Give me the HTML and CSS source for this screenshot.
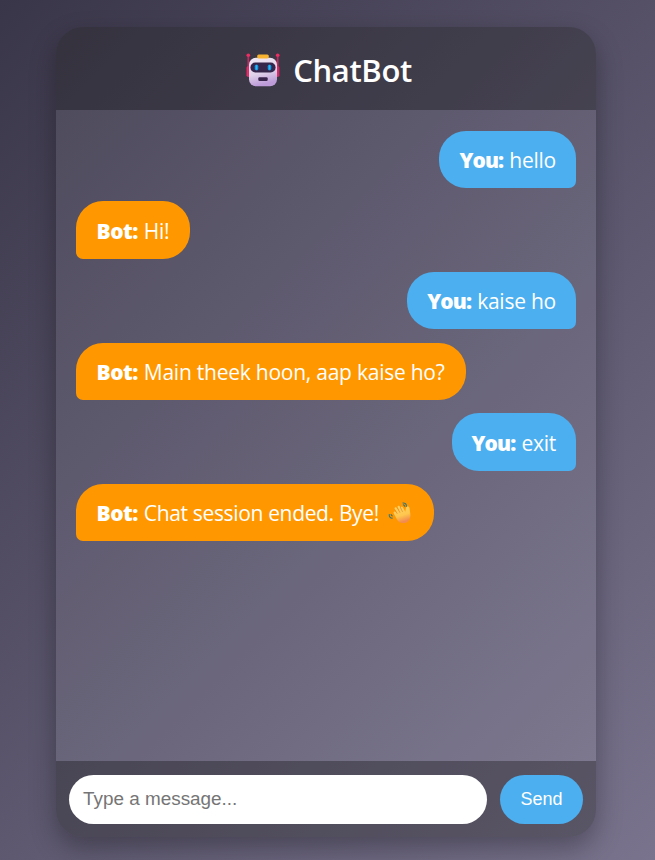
FILE: index.html
```html
<!DOCTYPE html>
<html lang="en">
<head>
<meta charset="utf-8">
<title>ChatBot</title>
<link rel="stylesheet" href="styles.css">
</head>
<body>
<main class="chat">
  <header class="chat-header">
    <svg class="robot" viewBox="0 0 34 34" aria-hidden="true">
      <defs>
        <linearGradient id="face" x1="0" y1="0" x2="0.25" y2="1"><stop offset="0" stop-color="#f1e9f6"/><stop offset=".6" stop-color="#dfd2e9"/><stop offset="1" stop-color="#bd9bd8"/></linearGradient>
        <linearGradient id="ear" x1="0" y1="0" x2="1" y2="0"><stop offset="0" stop-color="#f72d68"/><stop offset="1" stop-color="#c92565"/></linearGradient>
      </defs>
      <path d="M2.3 3v15M31.7 3v15" stroke="#c82860" stroke-width="1.7"/>
      <circle cx="2.3" cy="2.2" r="1.8" fill="#ee2d62"/><circle cx="31.7" cy="2.2" r="1.8" fill="#ee2d62"/>
      <rect x=".6" y="13" width="4" height="11" rx="1.8" fill="url(#ear)"/><rect x="29.4" y="13" width="4" height="11" rx="1.8" fill="url(#ear)"/>
      <rect x="3" y="4.8" width="28" height="28.4" rx="7" fill="url(#face)"/>
      <rect x="11.2" y="1.4" width="11.6" height="4" rx="1.5" fill="#f8b331"/>
      <rect x="4.4" y="9.6" width="25.2" height="9.8" rx="4.9" fill="#36264c"/>
      <rect x="8.7" y="11.4" width="3.6" height="6.2" rx="1.8" fill="#1688cf"/><rect x="21.7" y="11.4" width="3.6" height="6.2" rx="1.8" fill="#1688cf"/>
      <rect x="9.7" y="12" width="1.6" height="4.8" rx=".8" fill="#25b8fa"/><rect x="22.7" y="12" width="1.6" height="4.8" rx=".8" fill="#25b8fa"/>
      <rect x="12.3" y="24.2" width="9.4" height="3.7" rx="1.2" fill="#39264d"/>
    </svg>
    <h1 class="title">ChatBot</h1>
  </header>
  <section class="messages">
    <p class="message user"><b>You:</b> <span>hello</span></p>
    <p class="message bot"><b>Bot:</b> <span>Hi!</span></p>
    <p class="message user"><b>You:</b> <span>kaise ho</span></p>
    <p class="message bot"><b>Bot:</b> <span>Main theek hoon, aap kaise ho?</span></p>
    <p class="message user"><b>You:</b> <span>exit</span></p>
    <p class="message bot closing"><b>Bot:</b> <span>Chat session ended. Bye!</span>
      <svg class="wave" viewBox="0 0 24 24" aria-hidden="true">
        <defs><linearGradient id="hand" x1="0" y1="0" x2=".3" y2="1"><stop offset="0" stop-color="#ffd36a"/><stop offset=".65" stop-color="#ffc64d"/><stop offset="1" stop-color="#f28b50"/></linearGradient></defs>
        <path d="M6 13c-1.3-2 .7-3.2 2-1.8l1.3 1.6-2.5-4.5c-.8-1.8 1.2-2.8 2.2-1.1l2.8 4.3-2.1-4.9c-.7-1.8 1.3-2.6 2.2-.9l2.6 5-1.5-3.5c-.6-1.7 1.2-2.3 2-.8l2.3 4.3.5-3.3c.4-2.5 3.5-2.3 3.7-.2.3 2.8 1.3 6.2.7 9-1.2 6.4-8.6 7.8-12.7 3z" fill="url(#hand)"/>
        <path d="M9.3 12.8 6.8 8.4M12 11.8 9.4 6.6M14.6 11 12.4 6.4" fill="none" stroke="#db8629" stroke-width=".6"/>
        <path d="M14.5 2c2.6-.4 4.2 1.2 3.9 3.7M14.9 3.9c1.3-.1 2 .6 1.8 1.9M1.4 13.2c-.6 2.3.9 4 3.2 3.9M3.2 13c-.3 1.3.5 2 1.6 2" fill="none" stroke="#3e7770" stroke-width="1.1"/>
      </svg></p>
  </section>
  <form class="composer">
    <input class="field" type="text" placeholder="Type a message..." aria-label="Message">
    <button class="send" type="button">Send</button>
  </form>
</main>
</body>
</html>
```
FILE: styles.css
```css
* { box-sizing: border-box; }
html, body { height: 100%; }
body {
  margin: 0;
  padding: 27px 59px 23px 56px;
  overflow: hidden;
  font-family: "Open Sans", "Noto Sans", sans-serif;
  background: linear-gradient(135deg, #3a3649, #79738d);
}
.chat {
  display: flex;
  flex-direction: column;
  width: 540px;
  height: 810px;
  overflow: hidden;
  border-radius: 27px;
  background: rgba(255, 255, 255, .08);
  box-shadow: 0 11px 27px rgba(0, 0, 0, .3);
}
.chat-header {
  display: flex;
  align-items: center;
  justify-content: center;
  gap: 13px;
  height: 83px;
  padding: 3px 0 0 6px;
  background: rgba(0, 0, 0, .3);
}
.robot { width: 34px; height: 34px; }
.title {
  margin: 0;
  color: #fff;
  font-size: 31px;
  line-height: 40px;
  font-weight: 600;
  letter-spacing: -.35px;
}
.messages {
  display: flex;
  flex: 1;
  flex-direction: column;
  gap: 13.33px;
  padding: 20.8px 20px;
}
.message {
  display: flex;
  align-items: center;
  gap: 6px;
  height: 57.3px;
  margin: 0;
  padding: 1.5px 20px 0;
  color: #fff;
  font-size: 21px;
  white-space: nowrap;
  border-radius: 27px;
}
.message b { font-weight: 800; letter-spacing: -.9px; }
.message span { letter-spacing: -.24px; }
.closing span { letter-spacing: -.34px; }
.user { align-self: flex-end; background: #4caff0; border-bottom-right-radius: 7px; }
.bot { align-self: flex-start; padding-right: 21px; padding-left: 20.5px; background: #ff9800; border-bottom-left-radius: 7px; }
.bot b { letter-spacing: -.5px; }
.closing { padding-right: 22px; }
.wave { width: 24px; height: 24px; margin: 0 0 0 3px; }
.composer {
  display: flex;
  gap: 13px;
  height: 76px;
  padding: 14px 13px 13px;
  background: rgba(0, 0, 0, .3);
}
.field, .send {
  height: 49px;
  border: 0;
  border-radius: 27px;
  font-family: "Liberation Sans", Arial, sans-serif;
}
.field { flex: 1; min-width: 0; padding: 0 14px 2px; font-size: 18.9px; background: #fff; }
.field::placeholder { color: #757575; }
.send { width: 83px; padding: 0; color: #fff; font-size: 18px; background: #4caff0; }
```
